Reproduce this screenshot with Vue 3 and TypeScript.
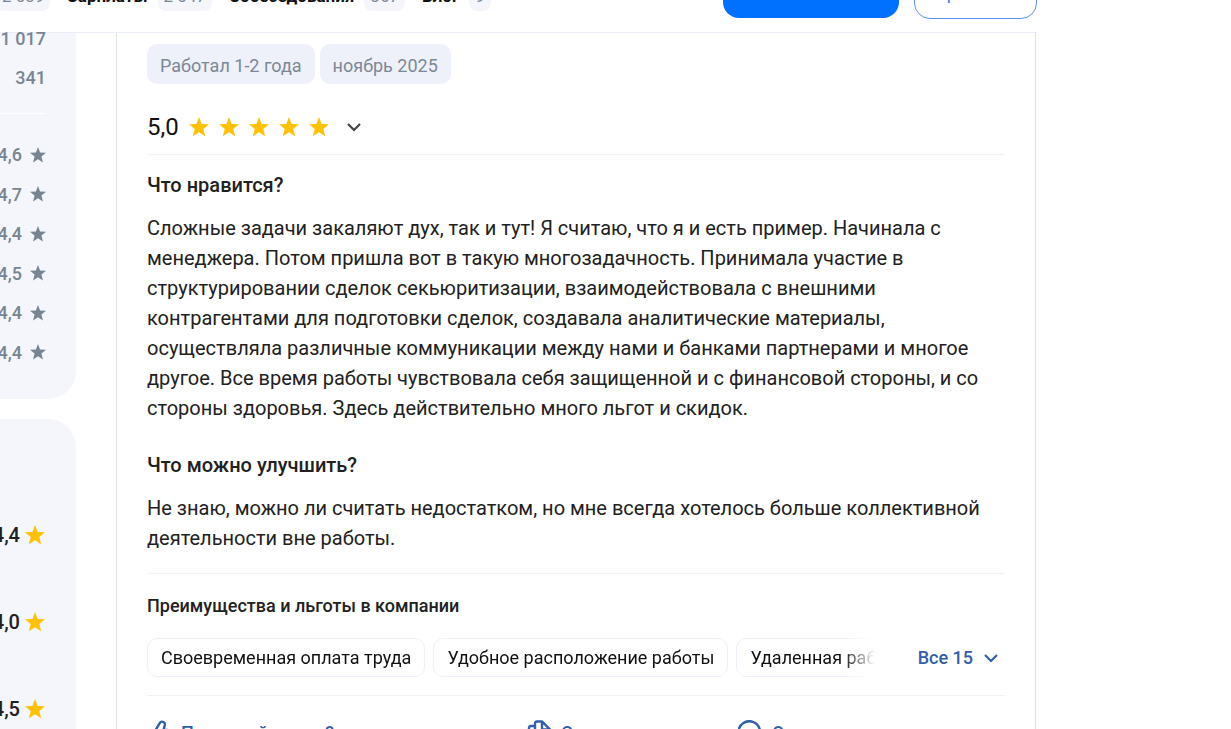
<script setup lang="ts">
interface NavItem { label: string; count: string }
interface Answer { label: string; value: string }

const nav: NavItem[] = [
  { label: 'Отзывы', count: '2 039' },
  { label: 'Зарплаты', count: '2 047' },
  { label: 'Собеседования', count: '367' },
  { label: 'Блог', count: '9' },
]
const totals: string[] = ['1 017', '341']
const metrics: string[] = ['4,6', '4,7', '4,4', '4,5', '4,4', '4,4']
const companies: string[] = ['4,4', '4,0', '4,5']
const tags: string[] = ['Работал 1-2 года', 'ноябрь 2025']
const answers: Answer[] = [
  {
    label: 'Что нравится?',
    value:
      'Сложные задачи закаляют дух, так и тут! Я считаю, что я и есть пример. Начинала с менеджера. Потом пришла вот в такую многозадачность. Принимала участие в структурировании сделок секьюритизации, взаимодействовала с внешними контрагентами для подготовки сделок, создавала аналитические материалы, осуществляла различные коммуникации между нами и банками партнерами и многое другое. Все время работы чувствовала себя защищенной и с финансовой стороны, и со стороны здоровья. Здесь действительно много льгот и скидок.',
  },
  {
    label: 'Что можно улучшить?',
    value:
      'Не знаю, можно ли считать недостатком, но мне всегда хотелось больше коллективной деятельности вне работы.',
  },
]
const benefits: string[] = ['Своевременная оплата труда', 'Удобное расположение работы', 'Удаленная работа']
const starPath = 'M12 1 14.9 8.600 23 9 16.700 14.200 18.800 22.300 12 17.800 5.200 22.300 7.300 14.200 1 9 9.100 8.600Z'
</script>

<template>
  <div class="page">
    <header class="header">
      <nav class="nav">
        <a v-for="item in nav" :key="item.label" href="#" class="nav-link">
          {{ item.label }} <span class="count">{{ item.count }}</span>
        </a>
      </nav>
      <div class="actions">
        <button type="button" class="primary">Написать отзыв</button>
        <button type="button" class="outline">Сравнить</button>
      </div>
    </header>

    <main class="content">
      <aside class="sidebar">
        <section class="panel summary">
          <p v-for="total in totals" :key="total" class="total">{{ total }}</p>
          <hr class="panel-line" />
          <div class="metrics">
            <p v-for="(metric, i) in metrics" :key="i" class="metric">
              {{ metric }}
              <svg class="metric-star" viewBox="1 1 22 22" aria-hidden="true"><path :d="starPath" /></svg>
            </p>
          </div>
        </section>
        <section class="panel similar">
          <p v-for="company in companies" :key="company" class="company">
            {{ company }}
            <svg class="star" viewBox="1 1 22 22" aria-hidden="true"><path :d="starPath" /></svg>
          </p>
        </section>
      </aside>

      <article class="review">
        <div class="tags">
          <span v-for="tag in tags" :key="tag" class="tag">{{ tag }}</span>
        </div>
        <button type="button" class="rating" aria-label="Оценка 5,0">
          <span class="score">5,0</span>
          <span class="stars">
            <svg v-for="n in 5" :key="n" class="star" viewBox="1 1 22 22" aria-hidden="true"><path :d="starPath" /></svg>
          </span>
          <svg class="chevron" viewBox="0 0 16 16" aria-hidden="true"><path d="M2 5l6 6 6-6" /></svg>
        </button>
        <div class="answers">
          <section v-for="answer in answers" :key="answer.label" class="answer">
            <h3>{{ answer.label }}</h3>
            <p>{{ answer.value }}</p>
          </section>
        </div>
        <section class="benefits">
          <h4>Преимущества и льготы в компании</h4>
          <div class="benefit-row">
            <ul class="benefit-list">
              <li v-for="benefit in benefits" :key="benefit">{{ benefit }}</li>
            </ul>
            <button type="button" class="all">
              Все 15
              <svg class="chevron" viewBox="0 0 16 16" aria-hidden="true"><path d="M2 5l6 6 6-6" /></svg>
            </button>
          </div>
        </section>
        <footer class="footer">
          <button type="button" class="action useful">
            <svg class="action-icon" viewBox="0 0 24 24" aria-hidden="true">
              <path d="M8 11 13 2.700C14 .8 18.500 1.500 17.800 5L16.500 10H20Q22 10 22 12L20.500 20Q20 22 18 22H8ZM8 11H3V22H8" />
            </svg>
            Полезный отзыв?
          </button>
          <button type="button" class="action share">
            <svg class="action-icon" viewBox="0 0 24 24" aria-hidden="true">
              <path d="M8 17V3.500Q8 1.500 10 1.500H15L23 9.500V15Q23 17 21 17ZM15 1.500V9.500H23M8 6H4Q2 6 2 8V20Q2 22 4 22H14Q16 22 16 20V17" />
            </svg>
            Скопировать
          </button>
          <button type="button" class="action">
            <svg class="action-icon" viewBox="0 0 24 24" aria-hidden="true">
              <path d="M4 20A10.800 10.800 0 1 1 12 22.800H2L4 20" />
            </svg>
            Ответить
          </button>
        </footer>
      </article>
    </main>
  </div>
</template>

<style>
html,
body,
#app {
  height: 100%;
}
body {
  margin: 0;
  overflow: hidden;
  background: #fff;
}
</style>

<style scoped>
* {
  box-sizing: border-box;
}
.page {
  display: flex;
  flex-direction: column;
  height: 100%;
  overflow: hidden;
  font-family: Roboto, 'Noto Sans', sans-serif;
  font-size: 18px;
  color: #212121;
}
p,
h3,
h4,
ul {
  margin: 0;
  padding: 0;
}
button {
  padding: 0;
  border: 0;
  background: none;
  font: inherit;
  color: inherit;
  cursor: pointer;
}
svg {
  flex: none;
}
.header {
  display: flex;
  flex: none;
  align-items: flex-end;
  justify-content: space-between;
  width: 1037px;
  max-width: 100%;
  height: 33px;
  border-bottom: 1px solid #e9edf7;
}
.nav {
  display: flex;
  gap: 17px;
  height: 32px;
  align-items: flex-end;
  margin-left: -81px;
  padding-bottom: 21px;
}
.nav-link {
  display: flex;
  align-items: center;
  gap: 10px;
  color: #111;
  font-weight: 700;
  font-size: 17px;
  line-height: 30px;
  text-decoration: none;
  white-space: nowrap;
}
.count {
  padding: 0 6px;
  border-radius: 8px;
  background: #f4f6fb;
  color: #7b8794;
  font-weight: 400;
}
.actions {
  display: flex;
  align-items: flex-end;
  gap: 15px;
  padding-bottom: 13px;
}
.primary,
.outline {
  width: 176px;
  height: 54px;
  margin-bottom: 1px;
  border-radius: 16px;
  background: #0070ff;
  color: #fff;
}
.outline {
  width: 123px;
  margin-bottom: 0;
  border: 1px solid #5b93f5;
  background: #fff;
  color: #3f7be8;
}
.content {
  display: flex;
  flex: 1;
  gap: 40px;
  min-height: 0;
  width: 1036px;
  max-width: 100%;
}
.sidebar {
  display: flex;
  flex: none;
  flex-direction: column;
  gap: 20px;
  width: 76px;
}
.panel {
  display: flex;
  flex-direction: column;
  align-items: flex-end;
  padding-right: 30px;
  background: #f4f6fb;
}
.summary {
  flex: none;
  height: 366px;
  padding-bottom: 27px;
  border-radius: 0 0 28px 0;
  color: #778593;
  font-weight: 500;
}
.total {
  height: 39px;
  line-height: 12px;
  white-space: nowrap;
}
.total + .total {
  height: 41px;
}
.panel-line {
  width: 100%;
  margin: 0 0 21px;
  border: 0;
  border-top: 1px solid #fff;
}
.metrics {
  display: flex;
  flex: 1;
  flex-direction: column;
}
.metric {
  display: flex;
  flex: 1;
  align-items: center;
  gap: 8px;
}
.metric-star {
  width: 16px;
  height: 16px;
  fill: #778593;
}
.similar {
  flex: 1;
  padding-top: 72px;
  padding-right: 31px;
  border-radius: 0 28px 0 0;
}
.company {
  display: flex;
  flex: none;
  align-items: center;
  gap: 5px;
  height: 87px;
  font-size: 20px;
  font-weight: 500;
}
.star {
  width: 20px;
  height: 20px;
  fill: #ffc107;
}
.review {
  flex: 1;
  min-width: 0;
  padding: 11px 30px 0;
  border: solid #dde2ec;
  border-width: 0 1px;
}
.tags {
  display: flex;
  gap: 5px;
}
.tag {
  padding: 3px 13px 0;
  border-radius: 10px;
  background: #eef1f9;
  color: #7b8896;
  line-height: 37px;
}
.rating {
  display: flex;
  align-items: center;
  width: 100%;
  height: 71px;
  padding-top: 15px;
  border-bottom: 1px solid #f1f2f7;
}
.score {
  color: #111;
  font-size: 24px;
}
.stars {
  display: flex;
  gap: 10px;
  margin: 0 17px 0 10px;
}
.chevron {
  width: 16px;
  height: 16px;
  fill: none;
  stroke: #444;
  stroke-width: 2.2;
}
.answers {
  display: flex;
  flex-direction: column;
  gap: 27px;
  padding: 15px 0 20px;
  border-bottom: 1px solid #f1f2f7;
}
.answer h3 {
  margin-bottom: 13px;
  font-size: 20px;
  font-weight: 500;
  line-height: 30px;
}
.answer p {
  font-size: 20px;
  line-height: 30px;
}
.benefits {
  padding: 20px 0 18px;
  border-bottom: 1px solid #f1f2f7;
}
.benefits h4 {
  margin-bottom: 20px;
  font-size: 18px;
  font-weight: 500;
  line-height: 24px;
}
.benefit-row {
  display: flex;
  align-items: center;
  justify-content: space-between;
}
.benefit-list {
  display: flex;
  gap: 8px;
  width: 728px;
  overflow: hidden;
  list-style: none;
  mask-image: linear-gradient(to right, #000 calc(100% - 32px), transparent);
}
.benefit-list li {
  flex: none;
  padding: 0 13px;
  border: 1px solid #eef0f9;
  border-radius: 10px;
  line-height: 37px;
  color: #111;
}
.all {
  display: flex;
  align-items: center;
  gap: 10px;
  padding-right: 6px;
  color: #315fa8;
  font-weight: 500;
}
.all .chevron {
  stroke: #315fa8;
}
.footer {
  display: flex;
  gap: 80px;
  padding-top: 24px;
  white-space: nowrap;
}
.action {
  display: flex;
  align-items: center;
  gap: 10px;
  color: #315fa8;
  font-weight: 500;
}
.useful {
  width: 300px;
}
.share {
  width: 131px;
}
.action-icon {
  width: 24px;
  height: 24px;
  fill: none;
  stroke: #315fa8;
  stroke-width: 2.4;
}
</style>
